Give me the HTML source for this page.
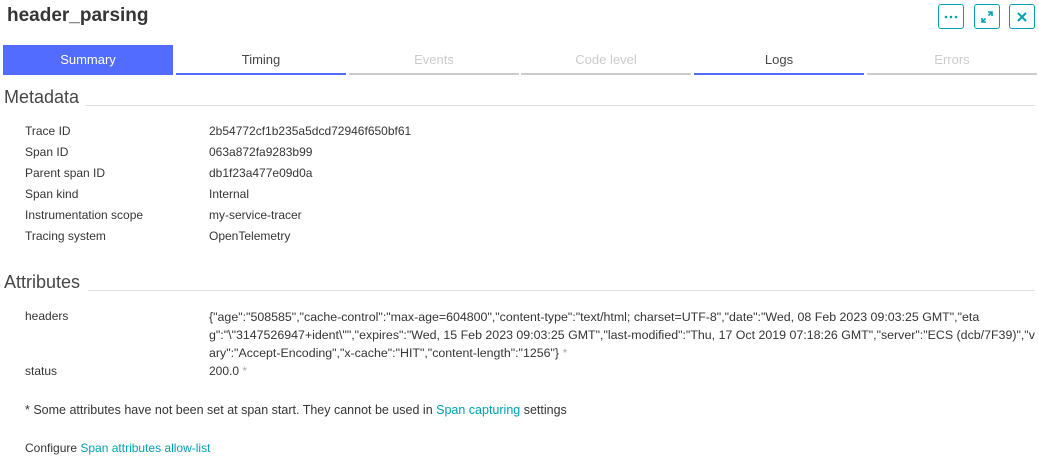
<!DOCTYPE html>
<html><head><meta charset="utf-8"><style>
*{margin:0;padding:0;box-sizing:border-box}
body{width:1039px;height:466px;background:#fff;font-family:"Liberation Sans",sans-serif;color:#353535;font-size:12px;position:relative;overflow:hidden}
.a{position:absolute;white-space:nowrap}
h1{position:absolute;left:7px;top:5px;font-size:19px;font-weight:bold;color:#353535}
.btn{position:absolute;top:4px;width:26px;height:25px;border:1px solid #00a1b2;border-radius:3px;color:#00a1b2;display:flex;align-items:center;justify-content:center}
.tab{position:absolute;top:45px;height:30px;width:170px;text-align:center;line-height:29px;font-size:13px;border-bottom:2px solid #ccc;color:#ccc}
.tab.b{border-bottom-color:#526cff;color:#454646}
.tab.s{background:#526cff;color:#fff;border-bottom-color:#526cff}
.hd{position:absolute;left:4px;font-size:18px;color:#454646}
.ln{position:absolute;height:1px;background:#e0e0e0;right:4px}
.l{left:25px}.v{left:209px}
.link{color:#00a1b2}
.g{color:#aaa}
</style></head><body>
<h1>header_parsing</h1>
<div class="btn" style="left:938px"><svg width="14" height="4"><circle cx="2" cy="2" r="1.3" fill="#00a1b2"/><circle cx="7" cy="2" r="1.3" fill="#00a1b2"/><circle cx="12" cy="2" r="1.3" fill="#00a1b2"/></svg></div>
<div class="btn" style="left:974px"><svg width="12" height="12"><path d="M7 1h4v4M11 1L7.5 4.5M5 11H1V7M1 11l3.5-3.5" stroke="#00a1b2" stroke-width="1.6" fill="none"/></svg></div>
<div class="btn" style="left:1009px"><svg width="10" height="10"><path d="M1 1l8 8M9 1L1 9" stroke="#00a1b2" stroke-width="2"/></svg></div>

<div class="tab s" style="left:3px">Summary</div>
<div class="tab b" style="left:176px">Timing</div>
<div class="tab" style="left:349px">Events</div>
<div class="tab" style="left:521px">Code level</div>
<div class="tab b" style="left:694px">Logs</div>
<div class="tab" style="left:867px">Errors</div>

<div class="hd" style="top:87px">Metadata</div><div class="ln" style="left:85px;top:105px"></div>
<div class="a l" style="top:124px">Trace ID</div><div class="a v" style="top:124px">2b54772cf1b235a5dcd72946f650bf61</div>
<div class="a l" style="top:145px">Span ID</div><div class="a v" style="top:145px">063a872fa9283b99</div>
<div class="a l" style="top:166px">Parent span ID</div><div class="a v" style="top:166px">db1f23a477e09d0a</div>
<div class="a l" style="top:187px">Span kind</div><div class="a v" style="top:187px">Internal</div>
<div class="a l" style="top:208px">Instrumentation scope</div><div class="a v" style="top:208px">my-service-tracer</div>
<div class="a l" style="top:229px">Tracing system</div><div class="a v" style="top:229px">OpenTelemetry</div>

<div class="hd" style="top:272px">Attributes</div><div class="ln" style="left:88px;top:290px"></div>
<div class="a l" style="top:309px">headers</div>
<div class="a v" style="top:308px;line-height:18px;font-size:12.4px">{"age":"508585","cache-control":"max-age=604800","content-type":"text/html; charset=UTF-8","date":"Wed, 08 Feb 2023 09:03:25 GMT","eta<br>g":"\"3147526947+ident\"","expires":"Wed, 15 Feb 2023 09:03:25 GMT","last-modified":"Thu, 17 Oct 2019 07:18:26 GMT","server":"ECS (dcb/7F39)","v<br>ary":"Accept-Encoding","x-cache":"HIT","content-length":"1256"} <span class="g">*</span></div>
<div class="a l" style="top:364px">status</div><div class="a v" style="top:364px">200.0 <span class="g">*</span></div>
<div class="a l" style="top:403px;font-size:12.5px">* Some attributes have not been set at span start. They cannot be used in <span class="link">Span capturing</span> settings</div>
<div class="a l" style="top:441px">Configure <span class="link">Span attributes allow-list</span></div>
</body></html>
